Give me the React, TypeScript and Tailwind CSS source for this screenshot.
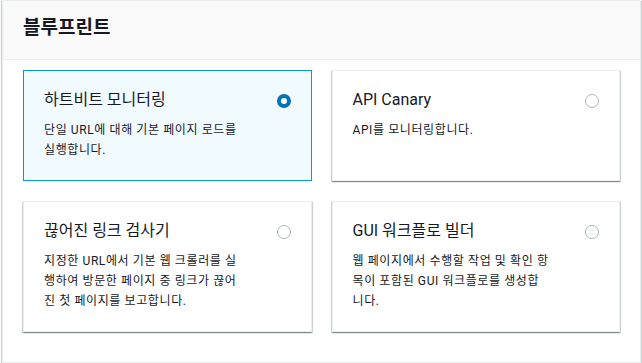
import React, { useState } from "react"

interface Blueprint {
  id: string
  title: string
  description: string
}

const blueprints: Blueprint[] = [
  { id: "heartbeat", title: "하트비트 모니터링", description: "단일 URL에 대해 기본 페이지 로드를 실행합니다." },
  { id: "api", title: "API Canary", description: "API를 모니터링합니다." },
  {
    id: "broken-link",
    title: "끊어진 링크 검사기",
    description: "지정한 URL에서 기본 웹 크롤러를 실행하여 방문한 페이지 중 링크가 끊어진 첫 페이지를 보고합니다.",
  },
  {
    id: "gui",
    title: "GUI 워크플로 빌더",
    description: "웹 페이지에서 수행할 작업 및 확인 항목이 포함된 GUI 워크플로를 생성합니다.",
  },
]

// Single selectable tile
function Tile({ item, selected, onSelect }: { item: Blueprint; selected: boolean; onSelect: () => void }) {
  return (
    <div
      onClick={onSelect}
      className={
        selected
          ? "flex cursor-pointer border border-[#00a1c9] bg-[#f1faff] px-5 pt-[18px] pb-5"
          : "flex cursor-pointer border border-[#eaeded] bg-white px-5 pt-[18px] pb-5 shadow-[0_1px_1px_0_rgba(0,28,36,0.3),1px_1px_1px_0_rgba(0,28,36,0.15),-1px_1px_1px_0_rgba(0,28,36,0.15)]"
      }
    >
      <div className="w-4/5 shrink-0">
        <div className="text-[16px] leading-[22px] text-[#16191f]">{item.title}</div>
        <p className="mt-[9px] text-[12px] leading-[20px] tracking-[0.6px] text-[#16191f]">{item.description}</p>
      </div>
      <div className="flex flex-1 justify-end pt-[5px]">
        {selected ? (
          <span className="block size-[14px] rounded-full border-[4px] border-[#0073bb] bg-white" />
        ) : (
          <span className="block size-[14px] rounded-full border border-[#aab7b8] bg-white" />
        )}
      </div>
    </div>
  )
}

export default function App() {
  const [selected, setSelected] = useState("heartbeat")

  return (
    <div
      className="ml-[2px] w-[639px] bg-white"
      style={{ fontFamily: 'Roboto, "Noto Sans CJK KR", sans-serif' }}
    >
      <div className="border border-[#eaeded] shadow-[0_1px_1px_0_rgba(0,28,36,0.3),1px_1px_1px_0_rgba(0,28,36,0.15),-1px_1px_1px_0_rgba(0,28,36,0.15)]">
        {/* Header */}
        <div className="flex h-[59px] items-center border-b border-[#eaeded] bg-[#fafafa] px-5 pb-1">
          <h2 className="text-[19px] font-bold leading-[24px] text-[#16191f]">블루프린트</h2>
        </div>

        {/* Tiles */}
        <div className="grid grid-cols-2 gap-x-5 gap-y-5 px-5 pt-[10px] pb-[30px]">
          {blueprints.map((b) => (
            <Tile key={b.id} item={b} selected={selected === b.id} onSelect={() => setSelected(b.id)} />
          ))}
        </div>
      </div>
    </div>
  )
}
